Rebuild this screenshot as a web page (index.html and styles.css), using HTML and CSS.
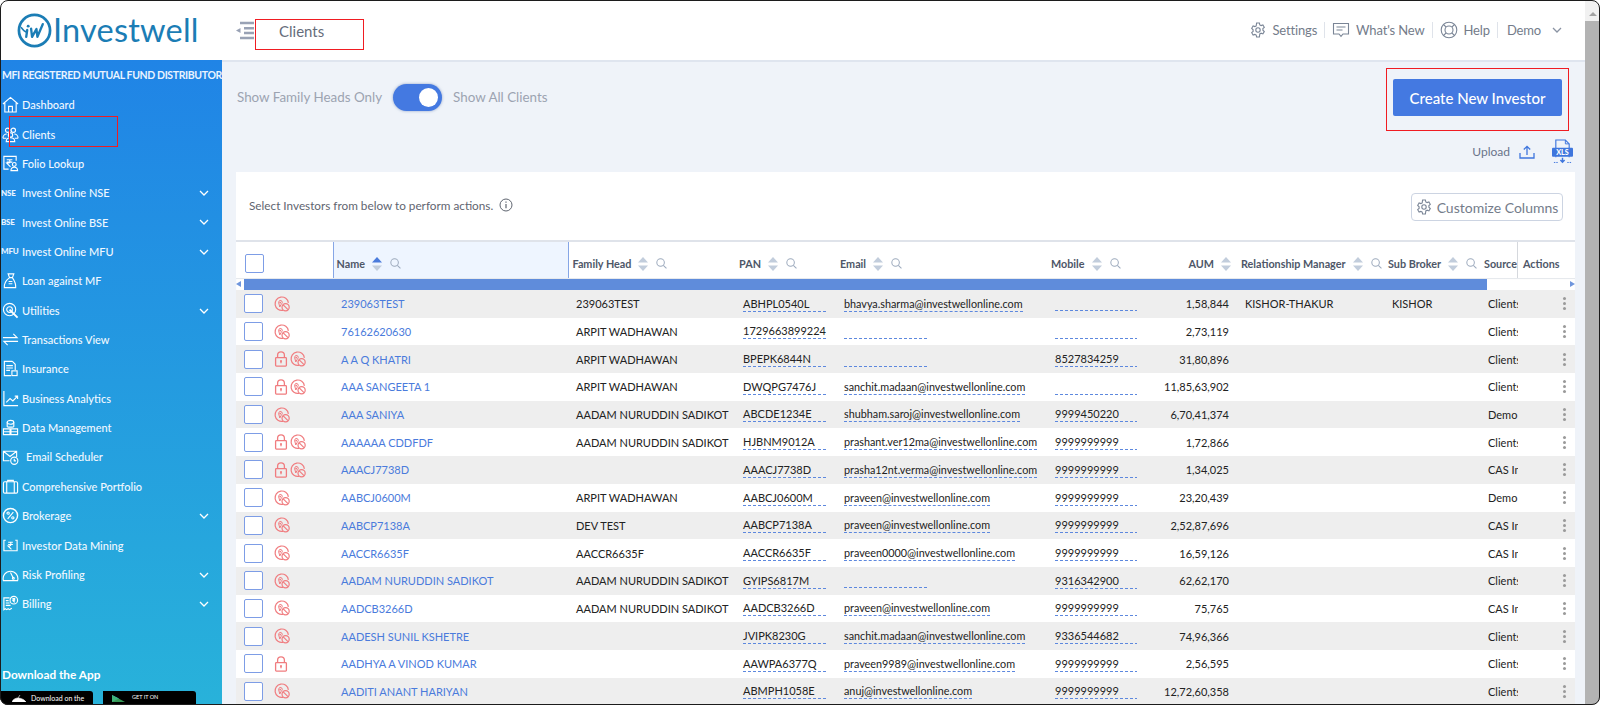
FILE: index.html
```html
<!DOCTYPE html>
<html lang="en">
<head>
<meta charset="utf-8">
<title>Investwell - Clients</title>
<link rel="stylesheet" href="styles.css">
</head>
<body>
<svg class="defs" width="0" height="0" aria-hidden="true">
  <symbol id="i-block" viewBox="0 0 16 16"><g fill="none" stroke="#f07c7f" stroke-width="1.2"><path d="M9 14.300A6.700 6.700 0 1 1 14.400 6.800"/><circle cx="11.600" cy="11.300" r="3.600"/><path d="M9.200 8.900l4.800 4.800"/><path d="M6.100 4.400a2.200 2.200 0 0 1 2.200 2.200c0 .9-.8 1.400-1.300 1.800L5.800 11 4.700 6.900A2.200 2.200 0 0 1 6.100 4.400z" stroke-width="1"/></g><circle cx="6.200" cy="6.600" r=".9" fill="#f07c7f"/></symbol>
  <symbol id="i-lock" viewBox="0 0 14 16"><g fill="none" stroke="#f07c7f" stroke-width="1.300"><rect x="1.600" y="6.700" width="10.800" height="8.400" rx=".8"/><path d="M3.600 6.700V4.200a3.400 3.400 0 0 1 6.800 0v2.500"/><path d="M7 10v2.200"/></g><circle cx="7" cy="10" r="1" fill="#f07c7f"/></symbol>
  <symbol id="i-sort" viewBox="0 0 10 14"><path d="M5 0l5 5.600H0z" fill="#c2cddc"/><path d="M5 14l5-5.600H0z" fill="#c2cddc"/></symbol>
  <symbol id="i-sort-up" viewBox="0 0 10 14"><path d="M5 0l5 5.600H0z" fill="#4a7bdc"/><path d="M5 14l5-5.600H0z" fill="#c2cddc"/></symbol>
  <symbol id="i-search" viewBox="0 0 12 12"><g fill="none" stroke="#9daabd" stroke-width="1.100"><circle cx="5" cy="5" r="4.100"/><path d="M8 8l3.400 3.400"/></g></symbol>
  <symbol id="i-gear" viewBox="0 0 16 16"><g fill="none" stroke="#7a8596" stroke-width="1.100"><path d="M6.600 1h2.800l.4 1.900 1.300.7 1.800-.7 1.400 2.400-1.400 1.300v1.600l1.400 1.300-1.400 2.400-1.800-.7-1.300.7L9.400 15H6.600l-.4-1.900-1.300-.7-1.800.7-1.400-2.400 1.400-1.300V7.800L1.700 6.300l1.400-2.400 1.800.7 1.300-.7z"/><circle cx="8" cy="8" r="2.200"/></g></symbol>
  <symbol id="i-chev" viewBox="0 0 10 6"><path d="M1 1l4 4 4-4" fill="none" stroke="currentColor" stroke-width="1.300"/></symbol>
</svg>

<div class="app">
  <div class="page">
    <header class="topbar">
      <div class="brand">
        <svg class="brand-mark" viewBox="0 0 36 36" aria-hidden="true"><circle cx="18" cy="18" r="16" fill="none" stroke="#1b7db5" stroke-width="2.800"/><path d="M4.500 15c2 3 4 4.500 6 5" fill="none" stroke="#1b7db5" stroke-width="1.600" stroke-linecap="round"/><circle cx="11.500" cy="13.500" r="1.500" fill="#1b7db5"/><path d="M10.500 17.500l-1 7M14.500 16l1 8.500 4.500-8 1 8 5.500-13" fill="none" stroke="#1b7db5" stroke-width="2.400" stroke-linecap="round" stroke-linejoin="round"/></svg>
        <span class="brand-name">Investwell</span>
      </div>
      <svg class="menu-ico" viewBox="0 0 18 19" aria-hidden="true"><path d="M4 2h14M8 7.200h10M8 12h10M4 17h14" stroke="#99a2b5" stroke-width="2.400"/><path d="M0 9.500l4.500-2.500v5z" fill="#99a2b5"/></svg>
      <span class="page-title">Clients</span>
      <nav class="top-nav">
        <span class="nav-item"><svg class="nav-ico" aria-hidden="true"><use href="#i-gear"/></svg>Settings</span>
        <span class="nav-sep"></span>
        <span class="nav-item"><svg class="nav-ico wide" viewBox="0 0 18 16" aria-hidden="true"><path d="M1.500 1.500h15v10.500H11l-2 2.400-2-2.400H1.500z" fill="none" stroke="#7a8596" stroke-width="1.100"/><path d="M4.500 5h9M4.500 8h6" stroke="#7a8596" stroke-width="1.100"/></svg>What's New</span>
        <span class="nav-sep"></span>
        <span class="nav-item"><svg class="nav-ico wide" viewBox="0 0 18 18" aria-hidden="true"><g fill="none" stroke="#7a8596" stroke-width="1.100"><circle cx="9" cy="9" r="7.800"/><circle cx="9" cy="9" r="4"/><path d="M3.500 3.500l2.700 2.700M14.500 3.500l-2.700 2.700M3.500 14.500l2.700-2.700M14.500 14.500l-2.700-2.700"/></g></svg>Help</span>
        <span class="nav-sep"></span>
        <span class="nav-item demo">Demo</span>
        <svg class="nav-chev" aria-hidden="true"><use href="#i-chev"/></svg>
      </nav>
    </header>

    <div class="body-row">
      <aside class="sidebar">
        <div class="side-head">MFI REGISTERED MUTUAL FUND DISTRIBUTOR</div>
        <ul class="side-list">
          <li class="side-item"><svg class="side-ico" viewBox="0 0 18 18" aria-hidden="true"><path d="M1 8.500L9 1.500l8 7M3 7.500V17h12V7.500M7 17v-6h4v6"/></svg><span>Dashboard</span></li>
          <li class="side-item"><svg class="side-ico" viewBox="0 0 18 18" aria-hidden="true"><circle cx="6" cy="4.500" r="2.300"/><circle cx="12" cy="4.500" r="2.300"/><circle cx="9" cy="9.500" r="2.300"/><path d="M1 13c0-3 2-4.500 4-4.500M17 13c0-3-2-4.500-4-4.500M4.500 16.500c0-2.500 2-4 4.500-4s4.500 1.500 4.500 4zM1 13h3.500M13.500 13H17"/></svg><span>Clients</span></li>
          <li class="side-item"><svg class="side-ico" viewBox="0 0 18 18" aria-hidden="true"><path d="M15 6V1.500H2V15h5"/><path d="M5 5h6M5 7.500h6M7 5c2 0 2 3.500 0 3.500H5l4 4"/><circle cx="13" cy="10" r="2"/><path d="M9.500 16.500c0-2.500 1.500-3.500 3.500-3.500s3.500 1 3.500 3.500z"/></svg><span>Folio Lookup</span></li>
          <li class="side-item has-sub"><span class="side-tag">NSE</span><span>Invest Online NSE</span><svg class="side-chev" aria-hidden="true"><use href="#i-chev"/></svg></li>
          <li class="side-item has-sub"><span class="side-tag">BSE</span><span>Invest Online BSE</span><svg class="side-chev" aria-hidden="true"><use href="#i-chev"/></svg></li>
          <li class="side-item has-sub"><span class="side-tag">MFU</span><span>Invest Online MFU</span><svg class="side-chev" aria-hidden="true"><use href="#i-chev"/></svg></li>
          <li class="side-item"><svg class="side-ico" viewBox="0 0 18 18" aria-hidden="true"><path d="M6.500 2h6l-1.500 4h-3zM8 6C4 9 2 12 2.500 16.500h12C15 12 13 9 11 6M7 10h4M7 12.500h4"/></svg><span>Loan against MF</span></li>
          <li class="side-item has-sub"><svg class="side-ico" viewBox="0 0 18 18" aria-hidden="true"><circle cx="8" cy="8" r="6.500"/><circle cx="8" cy="8" r="3"/><path d="M8 8l8.500 8.500" stroke-width="2"/></svg><span>Utilities</span><svg class="side-chev" aria-hidden="true"><use href="#i-chev"/></svg></li>
          <li class="side-item"><svg class="side-ico" viewBox="0 0 18 18" aria-hidden="true"><path d="M1 7h15l-4-4M17 11H2l4 4"/></svg><span>Transactions View</span></li>
          <li class="side-item"><svg class="side-ico" viewBox="0 0 18 18" aria-hidden="true"><path d="M11 1.500H2.500v15h7M11 1.500l3 3v6M4.500 6h7M4.500 8.500h7M4.500 11h4"/><rect x="10.500" y="11.500" width="5.500" height="5"/></svg><span>Insurance</span></li>
          <li class="side-item"><svg class="side-ico" viewBox="0 0 18 18" aria-hidden="true"><path d="M2 1v15.500h15M4.500 13l4-4 3 2.500 5-5M13.500 6.500h3v3"/></svg><span class="nudge">Business Analytics</span></li>
          <li class="side-item"><svg class="side-ico" viewBox="0 0 18 18" aria-hidden="true"><ellipse cx="9" cy="3.500" rx="3.500" ry="2"/><path d="M5.500 3.500V8c0 1 7 1 7 0V3.500M1.500 10.500h7v6h-7zM9.500 10.500h7v6h-7zM1.500 13.500h7M9.500 13.500h7"/></svg><span class="nudge">Data Management</span></li>
          <li class="side-item"><svg class="side-ico" viewBox="0 0 18 18" aria-hidden="true"><path d="M8 13.500H1.500V3.500h14v6M1.500 3.500l7 5.500 7-5.500"/><circle cx="13" cy="13.500" r="3.800"/><path d="M13 11.500v2.200h1.800"/></svg><span class="nudge-lg">Email Scheduler</span></li>
          <li class="side-item"><svg class="side-ico" viewBox="0 0 18 18" aria-hidden="true"><rect x="1.500" y="4" width="15" height="12" rx="1.500"/><path d="M6 4V2.500h6V4M5 4v12M13 4v12"/></svg><span class="nudge">Comprehensive Portfolio</span></li>
          <li class="side-item has-sub"><svg class="side-ico" viewBox="0 0 18 18" aria-hidden="true"><circle cx="9" cy="9" r="7.500" stroke-width="1.500"/><path d="M6 12.500l6-7"/><circle cx="6.500" cy="6.500" r="1.200"/><circle cx="11.500" cy="11.500" r="1.200"/></svg><span class="nudge">Brokerage</span><svg class="side-chev" aria-hidden="true"><use href="#i-chev"/></svg></li>
          <li class="side-item"><svg class="side-ico" viewBox="0 0 18 18" aria-hidden="true"><path d="M4 3.500H2v11h14v-11h-2"/><path d="M6.500 5.500h5M6.500 8h5M8 5.500c2 0 2 4 0 4H6.500l3.500 3.500"/></svg><span class="nudge">Investor Data Mining</span></li>
          <li class="side-item has-sub"><svg class="side-ico" viewBox="0 0 18 18" aria-hidden="true"><path d="M1.500 15.500a7.800 7.800 0 1 1 15 0zM9 7l3 6"/><circle cx="12" cy="13" r="1"/></svg><span>Risk Profiling</span><svg class="side-chev" aria-hidden="true"><use href="#i-chev"/></svg></li>
          <li class="side-item has-sub"><svg class="side-ico" viewBox="0 0 18 18" aria-hidden="true"><path d="M8 3H2v12.500l1.500-1 1.500 1 1.500-1 1.500 1 1.500-1 1-.5M4 6h3M4 8.500h4M4 11h5"/><circle cx="12.500" cy="5.500" r="4"/><path d="M11 3.800h3M11 5.300h3M12 3.800c1.500 0 1.500 2.500 0 2.500l1.500 1.500"/></svg><span class="nudge">Billing</span><svg class="side-chev" aria-hidden="true"><use href="#i-chev"/></svg></li>
        </ul>
        <div class="side-foot">
          <div class="foot-title">Download the App</div>
          <div class="stores">
            <div class="store store-apple"><svg class="store-ico" viewBox="0 0 14 7" aria-hidden="true"><path d="M0 7c1-3 4-4 6-4s6 1 8 4zM6 3l2-3" fill="#fff" stroke="#fff" stroke-width=".6"/></svg><span>Download on the</span></div>
            <div class="store store-play"><svg class="store-ico" viewBox="0 0 14 7" aria-hidden="true"><path d="M0 0l7 3.500L0 7z" fill="#3bb3e6"/><path d="M0 0l13 7H0z" fill="#3fb265" opacity=".85"/></svg><span>GET IT ON</span></div>
          </div>
        </div>
      </aside>

      <main class="main">
        <div class="toolbar">
          <div class="view-switch">
            <span>Show Family Heads Only</span>
            <span class="toggle"><span class="knob"></span></span>
            <span>Show All Clients</span>
          </div>
          <div class="actions">
            <button class="btn-primary" type="button">Create New Investor</button>
            <div class="upload-row">
              <span class="upload-label">Upload</span>
              <svg class="upload-ico" viewBox="0 0 16 14" aria-hidden="true"><path d="M8 10V1.500M4.800 4.500L8 1.300l3.200 3.200M1 8v5h14V8" fill="none" stroke="#3f76dd" stroke-width="1.300"/></svg>
              <svg class="xls-ico" viewBox="0 0 22 26" aria-hidden="true"><path d="M4 10V1h10l4 4v5M4 18v1M18 18v1" fill="none" stroke="#3f76dd" stroke-width="1.200"/><path d="M14 1v4h4" fill="none" stroke="#3f76dd" stroke-width="1"/><rect x="0" y="9" width="22" height="9.500" rx="1" fill="#3f76dd"/><path d="M11 19.500v4M8.800 21.800l2.200 2.400 2.200-2.400" fill="none" stroke="#3f76dd" stroke-width="1.500"/><path d="M2 24.500h4M16 24.500h4" stroke="#3f76dd" stroke-dasharray="1.500 1"/><text x="11" y="16.800" class="xls-text">XLS</text></svg>
            </div>
          </div>
        </div>

        <section class="card">
          <div class="card-head">
            <div class="hint">
              <span>Select Investors from below to perform actions.</span>
              <svg class="info-ico" viewBox="0 0 14 14" aria-hidden="true"><circle cx="7" cy="7" r="6" fill="none" stroke="#5f6570" stroke-width="1"/><path d="M7 6v4.200M7 3.500v1.300" stroke="#5f6570" stroke-width="1.200"/></svg>
            </div>
            <button class="btn-outline" type="button"><svg class="nav-ico" aria-hidden="true"><use href="#i-gear"/></svg>Customize Columns</button>
          </div>

          <table class="grid">
            <colgroup>
              <col class="c-sel"><col class="c-name"><col class="c-fam"><col class="c-pan"><col class="c-mail"><col class="c-mob"><col class="c-aum"><col class="c-rm"><col class="c-sub"><col class="c-src"><col class="c-act">
            </colgroup>
            <thead>
              <tr>
                <th class="th-sel"><span class="box box-head"></span></th>
                <th class="th-active"><span class="th-in">Name<svg class="sort" aria-hidden="true"><use href="#i-sort-up"/></svg><svg class="find" aria-hidden="true"><use href="#i-search"/></svg></span></th>
                <th><span class="th-in">Family Head<svg class="sort" aria-hidden="true"><use href="#i-sort"/></svg><svg class="find" aria-hidden="true"><use href="#i-search"/></svg></span></th>
                <th><span class="th-in">PAN<svg class="sort" aria-hidden="true"><use href="#i-sort"/></svg><svg class="find" aria-hidden="true"><use href="#i-search"/></svg></span></th>
                <th><span class="th-in">Email<svg class="sort" aria-hidden="true"><use href="#i-sort"/></svg><svg class="find" aria-hidden="true"><use href="#i-search"/></svg></span></th>
                <th><span class="th-in">Mobile<svg class="sort" aria-hidden="true"><use href="#i-sort"/></svg><svg class="find" aria-hidden="true"><use href="#i-search"/></svg></span></th>
                <th class="th-num"><span class="th-in">AUM<svg class="sort" aria-hidden="true"><use href="#i-sort"/></svg></span></th>
                <th><span class="th-in">Relationship Manager<svg class="sort" aria-hidden="true"><use href="#i-sort"/></svg><svg class="find" aria-hidden="true"><use href="#i-search"/></svg></span></th>
                <th><span class="th-in">Sub Broker<svg class="sort" aria-hidden="true"><use href="#i-sort"/></svg><svg class="find" aria-hidden="true"><use href="#i-search"/></svg></span></th>
                <th><span class="th-in">Source</span></th>
                <th class="th-act"><span class="th-in">Actions</span></th>
              </tr>
              <tr class="hscroll">
                <td colspan="11"><div class="hscroll-in"><span class="arrow arrow-l"></span><span class="thumb"></span><span class="arrow arrow-r"></span></div></td>
              </tr>
            </thead>
            <tbody>
              <tr><td class="sel"><div class="sel-in"><span class="box"></span><svg class="ic-block"><use href="#i-block"/></svg></div></td><td class="name">239063TEST</td><td>239063TEST</td><td><span class="edit">ABHPL0540L</span></td><td class="mail"><span class="edit">bhavya.sharma@investwellonline.com</span></td><td><span class="edit"></span></td><td class="num">1,58,844</td><td>KISHOR-THAKUR</td><td>KISHOR</td><td class="src">Clients</td><td class="more"><span class="dots"></span></td></tr>
              <tr><td class="sel"><div class="sel-in"><span class="box"></span><svg class="ic-block"><use href="#i-block"/></svg></div></td><td class="name">76162620630</td><td>ARPIT WADHAWAN</td><td><span class="edit">1729663899224</span></td><td class="mail"><span class="edit"></span></td><td><span class="edit"></span></td><td class="num">2,73,119</td><td></td><td></td><td class="src">Clients</td><td class="more"><span class="dots"></span></td></tr>
              <tr><td class="sel"><div class="sel-in"><span class="box"></span><svg class="ic-lock"><use href="#i-lock"/></svg><svg class="ic-block"><use href="#i-block"/></svg></div></td><td class="name">A A Q KHATRI</td><td>ARPIT WADHAWAN</td><td><span class="edit">BPEPK6844N</span></td><td class="mail"><span class="edit"></span></td><td><span class="edit">8527834259</span></td><td class="num">31,80,896</td><td></td><td></td><td class="src">Clients</td><td class="more"><span class="dots"></span></td></tr>
              <tr><td class="sel"><div class="sel-in"><span class="box"></span><svg class="ic-lock"><use href="#i-lock"/></svg><svg class="ic-block"><use href="#i-block"/></svg></div></td><td class="name">AAA SANGEETA 1</td><td>ARPIT WADHAWAN</td><td><span class="edit">DWQPG7476J</span></td><td class="mail"><span class="edit">sanchit.madaan@investwellonline.com</span></td><td><span class="edit"></span></td><td class="num">11,85,63,902</td><td></td><td></td><td class="src">Clients</td><td class="more"><span class="dots"></span></td></tr>
              <tr><td class="sel"><div class="sel-in"><span class="box"></span><svg class="ic-block"><use href="#i-block"/></svg></div></td><td class="name">AAA SANIYA</td><td>AADAM NURUDDIN SADIKOT</td><td><span class="edit">ABCDE1234E</span></td><td class="mail"><span class="edit">shubham.saroj@investwellonline.com</span></td><td><span class="edit">9999450220</span></td><td class="num">6,70,41,374</td><td></td><td></td><td class="src">Demo</td><td class="more"><span class="dots"></span></td></tr>
              <tr><td class="sel"><div class="sel-in"><span class="box"></span><svg class="ic-lock"><use href="#i-lock"/></svg><svg class="ic-block"><use href="#i-block"/></svg></div></td><td class="name">AAAAAA CDDFDF</td><td>AADAM NURUDDIN SADIKOT</td><td><span class="edit">HJBNM9012A</span></td><td class="mail"><span class="edit">prashant.ver12ma@investwellonline.com</span></td><td><span class="edit">9999999999</span></td><td class="num">1,72,866</td><td></td><td></td><td class="src">Clients</td><td class="more"><span class="dots"></span></td></tr>
              <tr><td class="sel"><div class="sel-in"><span class="box"></span><svg class="ic-lock"><use href="#i-lock"/></svg><svg class="ic-block"><use href="#i-block"/></svg></div></td><td class="name">AAACJ7738D</td><td></td><td><span class="edit">AAACJ7738D</span></td><td class="mail"><span class="edit">prasha12nt.verma@investwellonline.com</span></td><td><span class="edit">9999999999</span></td><td class="num">1,34,025</td><td></td><td></td><td class="src">CAS Import</td><td class="more"><span class="dots"></span></td></tr>
              <tr><td class="sel"><div class="sel-in"><span class="box"></span><svg class="ic-block"><use href="#i-block"/></svg></div></td><td class="name">AABCJ0600M</td><td>ARPIT WADHAWAN</td><td><span class="edit">AABCJ0600M</span></td><td class="mail"><span class="edit">praveen@investwellonline.com</span></td><td><span class="edit">9999999999</span></td><td class="num">23,20,439</td><td></td><td></td><td class="src">Demo</td><td class="more"><span class="dots"></span></td></tr>
              <tr><td class="sel"><div class="sel-in"><span class="box"></span><svg class="ic-block"><use href="#i-block"/></svg></div></td><td class="name">AABCP7138A</td><td>DEV TEST</td><td><span class="edit">AABCP7138A</span></td><td class="mail"><span class="edit">praveen@investwellonline.com</span></td><td><span class="edit">9999999999</span></td><td class="num">2,52,87,696</td><td></td><td></td><td class="src">CAS Import</td><td class="more"><span class="dots"></span></td></tr>
              <tr><td class="sel"><div class="sel-in"><span class="box"></span><svg class="ic-block"><use href="#i-block"/></svg></div></td><td class="name">AACCR6635F</td><td>AACCR6635F</td><td><span class="edit">AACCR6635F</span></td><td class="mail"><span class="edit">praveen0000@investwellonline.com</span></td><td><span class="edit">9999999999</span></td><td class="num">16,59,126</td><td></td><td></td><td class="src">CAS Import</td><td class="more"><span class="dots"></span></td></tr>
              <tr><td class="sel"><div class="sel-in"><span class="box"></span><svg class="ic-block"><use href="#i-block"/></svg></div></td><td class="name">AADAM NURUDDIN SADIKOT</td><td>AADAM NURUDDIN SADIKOT</td><td><span class="edit">GYIPS6817M</span></td><td class="mail"><span class="edit"></span></td><td><span class="edit">9316342900</span></td><td class="num">62,62,170</td><td></td><td></td><td class="src">Clients</td><td class="more"><span class="dots"></span></td></tr>
              <tr><td class="sel"><div class="sel-in"><span class="box"></span><svg class="ic-block"><use href="#i-block"/></svg></div></td><td class="name">AADCB3266D</td><td>AADAM NURUDDIN SADIKOT</td><td><span class="edit">AADCB3266D</span></td><td class="mail"><span class="edit">praveen@investwellonline.com</span></td><td><span class="edit">9999999999</span></td><td class="num">75,765</td><td></td><td></td><td class="src">CAS Import</td><td class="more"><span class="dots"></span></td></tr>
              <tr><td class="sel"><div class="sel-in"><span class="box"></span><svg class="ic-block"><use href="#i-block"/></svg></div></td><td class="name">AADESH SUNIL KSHETRE</td><td></td><td><span class="edit">JVIPK8230G</span></td><td class="mail"><span class="edit">sanchit.madaan@investwellonline.com</span></td><td><span class="edit">9336544682</span></td><td class="num">74,96,366</td><td></td><td></td><td class="src">Clients</td><td class="more"><span class="dots"></span></td></tr>
              <tr><td class="sel"><div class="sel-in"><span class="box"></span><svg class="ic-lock"><use href="#i-lock"/></svg></div></td><td class="name">AADHYA A VINOD KUMAR</td><td></td><td><span class="edit">AAWPA6377Q</span></td><td class="mail"><span class="edit">praveen9989@investwellonline.com</span></td><td><span class="edit">9999999999</span></td><td class="num">2,56,595</td><td></td><td></td><td class="src">Clients</td><td class="more"><span class="dots"></span></td></tr>
              <tr><td class="sel"><div class="sel-in"><span class="box"></span><svg class="ic-block"><use href="#i-block"/></svg></div></td><td class="name">AADITI ANANT HARIYAN</td><td></td><td><span class="edit">ABMPH1058E</span></td><td class="mail"><span class="edit">anuj@investwellonline.com</span></td><td><span class="edit">9999999999</span></td><td class="num">12,72,60,358</td><td></td><td></td><td class="src">Clients</td><td class="more"><span class="dots"></span></td></tr>
            </tbody>
          </table>
        </section>
      </main>
    </div>
  </div>
  <div class="vscroll"><span class="vscroll-up"></span><span class="vscroll-thumb"></span></div>
</div>

<div class="mark mark-title"></div>
<div class="mark mark-side"></div>
<div class="mark mark-create"></div>
<div class="frame"></div>
</body>
</html>
```
FILE: styles.css
```css
* { box-sizing: border-box; }
html, body { height: 100%; margin: 0; }
body { font-family: Lato, "Open Sans", sans-serif; background: #fff; overflow: hidden; color: #222; }
.defs { position: absolute; }
.app { display: flex; width: 1600px; height: 705px; overflow: hidden; }
.page { flex: 1; min-width: 0; display: flex; flex-direction: column; }

/* top bar */
.topbar { flex: 0 0 60px; display: flex; align-items: center; background: #fff; }
.brand { width: 236px; display: flex; align-items: center; padding-left: 17px; }
.brand-mark { width: 35px; height: 35px; flex: none; }
.brand-name { font-size: 32.500px; line-height: 36px; color: #1b7db5; margin-left: 1px; letter-spacing: .2px; }
.menu-ico { width: 18px; height: 19px; flex: none; }
.page-title { margin-left: 25px; font-size: 15px; color: #666d7b; position: relative; top: 1px; }
.top-nav { margin-left: auto; display: flex; align-items: center; color: #747c8a; font-size: 13px; letter-spacing: -.15px; padding-right: 23px; }
.nav-item { display: flex; align-items: center; gap: 6px; }
.nav-ico { width: 16px; height: 16px; flex: none; }
.nav-ico.wide { width: 18px; height: 18px; }
.nav-sep { width: 1px; height: 16px; background: #dfe3ea; margin: 0 7px; }
.demo { margin-left: 2px; }
.nav-chev { width: 10px; height: 6px; margin-left: 11px; color: #8a93a3; }

.body-row { flex: 1; min-height: 0; display: flex; }

/* sidebar */
.sidebar { flex: 0 0 222px; display: flex; flex-direction: column; background: linear-gradient(180deg, #2084e6 0%, #28b2da 100%); color: #fff; overflow: hidden; position: relative; }
.side-head { font-size: 10.500px; font-weight: 700; letter-spacing: -.38px; white-space: nowrap; padding: 7px 0 0 2px; line-height: 16px; color: #e9f3ff; }
.side-list { list-style: none; margin: 7px 0 0; padding: 0; }
.side-item { height: 29.370px; display: flex; align-items: center; padding-left: 2px; font-size: 11px; font-weight: 500; position: relative; color: #f1f8ff; }
.side-ico { width: 17px; height: 17px; flex: none; margin-right: 3px; fill: none; stroke: #fff; stroke-width: 1.200; }
.side-tag { width: 20px; flex: none; margin-left: -1px; margin-right: 1px; font-size: 8px; font-weight: 900; letter-spacing: -.2px; color: #e8f3ff; }
.nudge { margin-left: 0; }
.nudge-lg { margin-left: 4px; }
.side-chev { position: absolute; right: 13px; top: 12px; width: 10px; height: 6px; color: #fff; }
.side-foot { margin-top: auto; }
.foot-title { font-size: 11.800px; font-weight: 700; padding-left: 2px; line-height: 16px; margin-bottom: 8px; }
.stores { display: flex; gap: 10px; height: 14px; }
.store { height: 20px; background: #000; border-radius: 0 3px 0 0; display: flex; align-items: flex-start; color: #fff; white-space: nowrap; padding-top: 3px; }
.store-apple { width: 93px; padding-left: 12px; gap: 5px; font-size: 7px; }
.store-play { width: 93px; padding-left: 9px; gap: 6px; font-size: 5.500px; }
.store-ico { width: 14px; height: 7px; flex: none; margin-top: 1px; }

/* main */
.main { flex: 1; min-width: 0; background: #eff3f9; border-top: 2px solid #dfe5ef; padding-left: 14px; padding-right: 10px; display: flex; flex-direction: column; overflow: hidden; }
.toolbar { flex: 0 0 110px; display: flex; justify-content: space-between; }
.view-switch { display: flex; align-items: center; gap: 11px; height: 27px; margin: 21px 0 0 1px; font-size: 13.400px; color: #9ca3b1; }
.toggle { width: 49px; height: 27px; margin-top: 2px; border-radius: 14px; background: #4479e1; position: relative; box-shadow: 0 0 3px rgba(80, 110, 170, .6); }
.knob { position: absolute; right: 4px; top: 4px; width: 19px; height: 19px; border-radius: 50%; background: #fff; }
.actions { display: flex; flex-direction: column; align-items: flex-end; }
.btn-primary { margin: 17px 13px 0 0; width: 169px; height: 37px; border: 0; border-radius: 2px; background: #4479e1; color: #fff; font: 500 15px Lato, sans-serif; }
.upload-row { display: flex; align-items: center; margin-top: 23px; margin-right: 2px; height: 25px; }
.upload-label { font-size: 12px; color: #69748a; }
.upload-ico { width: 16px; height: 14px; margin-left: 9px; }
.xls-ico { width: 21px; height: 25px; margin-left: 17px; }
.xls-text { font: 900 7.500px Lato, sans-serif; fill: #fff; text-anchor: middle; }

/* card */
.card { flex: 1; min-height: 0; background: #fff; overflow: hidden; }
.card-head { height: 68px; display: flex; align-items: flex-start; justify-content: space-between; padding: 21px 12px 0 13px; }
.hint { display: flex; align-items: center; gap: 6px; height: 24px; font-size: 11.750px; color: #5f6570; }
.info-ico { width: 14px; height: 14px; }
.btn-outline { width: 152px; height: 28px; display: flex; align-items: center; justify-content: center; gap: 5px; padding: 0; border: 1px solid #ccd4e2; border-radius: 4px; background: #fff; font: 400 14px Lato, sans-serif; color: #747c8a; }

/* table */
.grid { width: 1339px; table-layout: fixed; border-collapse: collapse; border-top: 2px solid #dfe3ea; font-size: 11px; }
.c-sel { width: 97px; } .c-name { width: 235px; } .c-fam { width: 167px; } .c-pan { width: 101px; } .c-mail { width: 211px; } .c-mob { width: 90px; } .c-aum { width: 100px; } .c-rm { width: 147px; } .c-sub { width: 96px; } .c-src { width: 37.500px; } .c-act { width: 57.500px; }
.grid th { height: 37px; padding: 7px 0 0 4px; text-align: left; font-weight: 700; font-size: 10.800px; color: #4e5768; white-space: nowrap; overflow: hidden; }
.th-in { display: inline-flex; align-items: center; }
.sort { width: 10px; height: 14px; margin-left: 7px; }
.find { width: 11px; height: 11px; margin-left: 8px; }
.grid .th-sel { padding: 7px 0 0 9px; }
.grid .th-active { background: #eef5ff; border: solid #86a6e6; border-width: 1px 1px 0; padding-left: 3px; }
.grid .th-num { text-align: right; padding-right: 6px; }
.grid .th-act { border-left: 1px solid #d5d8dd; padding-left: 5px; }
.box { display: block; width: 19px; height: 19px; flex: none; background: #fff; border: 1px solid #7d9de6; border-radius: 2px; }
.hscroll td { height: 12px; padding: 0; }
.hscroll-in { display: flex; align-items: center; height: 12px; box-shadow: inset 0 1px 1px #e4e7ec; }
.arrow { flex: none; width: 0; height: 0; border-style: solid; border-width: 3.500px 0; border-color: transparent; }
.arrow-l { border-right: 5px solid #6f96dd; margin-right: 3px; }
.arrow-r { border-left: 5px solid #6f96dd; margin-left: auto; margin-right: 0; }
.thumb { width: 1243px; height: 11px; margin-top: 1px; background: #5f8cdb; }
.grid tbody tr:nth-child(odd) { background: #eee; }
.grid tbody td { height: 27.700px; padding: 0 0 0 8px; color: #222; white-space: nowrap; overflow: hidden; vertical-align: middle; }
.grid tbody td.sel { padding-left: 8px; }
.sel-in { display: flex; align-items: center; }
.ic-block { width: 16px; height: 16px; margin-left: 0; flex: none; }
.ic-lock { width: 14px; height: 16px; flex: none; margin-right: 2px; }
.sel-in .box + svg { margin-left: 11px; }
.grid tbody td.name { color: #4a7bdc; }
.grid tbody td.mail { font-size: 10.800px; }
.edit { display: inline-block; min-width: 83px; min-height: 14px; line-height: 14px; border-bottom: 1px dashed #5d88de; vertical-align: middle; }
.grid tbody td.num { text-align: right; padding-right: 8px; }
.grid tbody td.src { padding-right: 0; }
.grid tbody td.more { padding: 0 0 0 45px; }
.dots { display: block; width: 3px; height: 3px; background: #9a9a9a; border-radius: 50%; box-shadow: 0 -5px 0 #9a9a9a, 0 5px 0 #9a9a9a; }

/* page scrollbar */
.vscroll { flex: 0 0 15px; background: #f1f1f1; display: flex; flex-direction: column; align-items: center; }
.vscroll-up { width: 0; height: 0; margin: 12px 0 5px; border: solid transparent; border-width: 0 4px 4px; border-bottom-color: #a3a3a3; }
.vscroll-thumb { flex: 1; width: 100%; background: #b3b3b3; }

/* annotations laid over the screenshot */
.mark { position: fixed; border: 1px solid #f01c22; pointer-events: none; }
.mark-title { left: 255px; top: 19px; width: 109px; height: 31px; }
.mark-side { left: 9px; top: 116px; width: 109px; height: 31px; }
.mark-create { left: 1386px; top: 68px; width: 183px; height: 63px; }
.frame { position: fixed; inset: 0; width: 1600px; height: 705px; border: 1px solid #1c1c1c; border-radius: 8px; pointer-events: none; box-shadow: 0 0 0 6px #fff; }
```
